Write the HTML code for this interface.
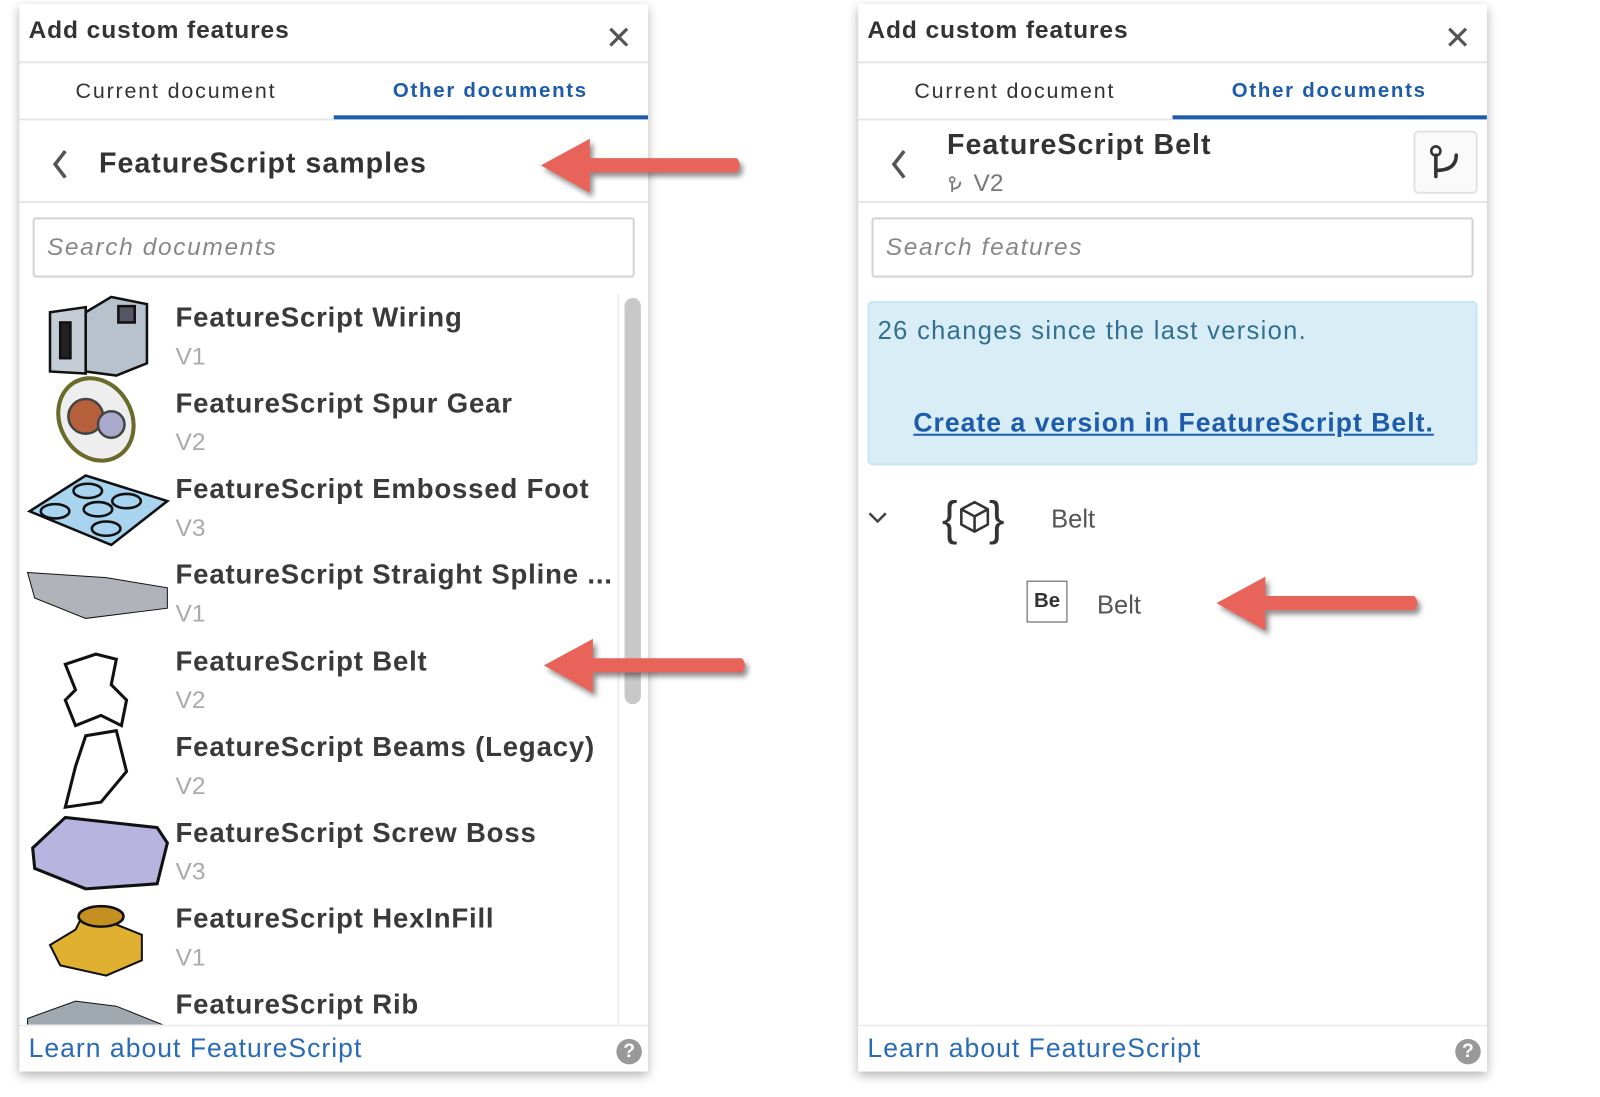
<!DOCTYPE html>
<html><head><meta charset="utf-8"><style>
*{box-sizing:border-box;margin:0;padding:0}
body{width:1600px;height:1097px;overflow:hidden;background:#fff;font-family:"Liberation Sans",sans-serif}
#w{position:absolute;left:0;top:0;width:1560px;height:1070px;transform:scale(1.0205);transform-origin:0 0}
.p{position:absolute;top:4px;width:616px;height:1046px;background:#fff;box-shadow:0 4px 10px rgba(0,0,0,.3)}
.a{position:absolute;white-space:nowrap}
.hl{position:absolute;left:0;right:0;height:2px;background:#e6e6e6}
.ttl{font-size:24px;font-weight:bold;color:#333;letter-spacing:.9px}
.tab{font-size:21px;color:#333;letter-spacing:1.8px}
.srch{position:absolute;border:2px solid #d4d4d4;border-radius:3px;height:59px}
.srch span{position:absolute;left:12px;top:14px;font-size:24px;font-style:italic;color:#888;letter-spacing:1.6px}
.nm{font-size:27px;font-weight:bold;color:#3a3a3a;letter-spacing:.8px}
.vr{font-size:24px;color:#aaa}
.lk{font-size:26px;color:#2a6bb8;letter-spacing:1px}
</style></head><body><div id="w">

<div class="p" style="left:19px">
 <div class="a ttl" style="left:9px;top:12px">Add custom features</div>
 <div class="a" style="left:574px;top:14px;font-size:32px;color:#555">✕</div>
 <div class="hl" style="top:56px"></div>
 <div class="a tab" style="left:55px;top:74px">Current document</div>
 <div class="a tab" style="left:366px;top:74px;color:#1c5cab;font-weight:bold;font-size:20px;letter-spacing:1.7px">Other documents</div>
 <div class="a" style="left:308px;top:109px;width:308px;height:4px;background:#1c5cab"></div>
 <div class="hl" style="top:112px;right:308px"></div>
 <svg class="a" style="left:30px;top:140px" width="20" height="34"><path d="M15 4 L5 17 L15 30" stroke="#555" stroke-width="3.5" fill="none"/></svg>
 <div class="a nm" style="left:78px;top:140px;font-size:28px;font-weight:bold;color:#333;letter-spacing:1px">FeatureScript samples</div>
 <div class="hl" style="top:193px"></div>
 <div class="srch" style="left:13px;top:209px;width:590px"><span>Search documents</span></div>
 <div class="a" style="left:586px;top:284px;width:2px;height:718px;background:#eee"></div>
 <div class="a" style="left:593px;top:288px;width:16px;height:398px;background:#c8c8c8;border-radius:8px"></div>

 <svg class="a" style="left:5px;top:282px" width="145" height="720">
  <g stroke="#111" stroke-width="2.5">
   <path d="M25 20 L60 15 L60 80 L25 78Z" fill="#c5cdd6"/>
   <path d="M60 20 L85 5 L120 12 L120 70 L90 82 L60 78Z" fill="#b8c2cc"/>
   <rect x="35" y="30" width="10" height="35" fill="#222"/>
   <rect x="92" y="14" width="16" height="16" fill="#556"/>
   <ellipse cx="70" cy="125" rx="35" ry="42" fill="#eee" stroke="#6a6a2a" stroke-width="4" transform="rotate(-30 70 125)"/>
   <circle cx="60" cy="122" r="17" fill="#b5603a" stroke="#444"/>
   <circle cx="85" cy="130" r="13" fill="#aac" stroke="#444"/>
   <path d="M5 215 L60 180 L140 205 L85 248Z" fill="#a8d4ef"/>
   <g fill="#a8d4ef"><ellipse cx="62" cy="195" rx="14" ry="7"/><ellipse cx="100" cy="205" rx="14" ry="7"/><ellipse cx="72" cy="213" rx="14" ry="7"/><ellipse cx="30" cy="215" rx="14" ry="7"/><ellipse cx="80" cy="232" rx="14" ry="7"/></g>
   <path d="M3 275 L80 280 L140 290 L140 310 L60 320 L10 300Z" fill="#b0b4ba" stroke-width="1"/>
   <path d="M70 355 L90 360 L85 385 L100 400 L95 425 L75 415 L50 425 L40 400 L50 390 L40 365Z" fill="none" stroke-width="3"/>
   <path d="M60 435 L90 430 L100 470 L75 500 L40 505 L50 465Z" fill="none" stroke-width="3"/>
   <path d="M8 545 L40 515 L130 525 L140 540 L130 580 L60 585 L10 565Z" fill="#b8b4e0" stroke-width="3"/>
   <path d="M55 615 L85 610 L90 620 L115 630 L115 655 L80 670 L35 660 L25 640 L50 625Z" fill="#e0b030" stroke-width="2"/>
   <ellipse cx="75" cy="612" rx="22" ry="10" fill="#c49020"/>
   <path d="M3 712 L50 695 L90 700 L140 720 L3 720Z" fill="#a0a8b0" stroke-width="1"/>
  </g>
 </svg>

 <div class="a nm" style="left:153px;top:292px">FeatureScript Wiring</div><div class="a vr" style="left:153px;top:332px">V1</div>
 <div class="a nm" style="left:153px;top:376px">FeatureScript Spur Gear</div><div class="a vr" style="left:153px;top:416px">V2</div>
 <div class="a nm" style="left:153px;top:460px">FeatureScript Embossed Foot</div><div class="a vr" style="left:153px;top:500px">V3</div>
 <div class="a nm" style="left:153px;top:544px">FeatureScript Straight Spline ...</div><div class="a vr" style="left:153px;top:584px">V1</div>
 <div class="a nm" style="left:153px;top:629px">FeatureScript Belt</div><div class="a vr" style="left:153px;top:669px">V2</div>
 <div class="a nm" style="left:153px;top:713px">FeatureScript Beams (Legacy)</div><div class="a vr" style="left:153px;top:753px">V2</div>
 <div class="a nm" style="left:153px;top:797px">FeatureScript Screw Boss</div><div class="a vr" style="left:153px;top:837px">V3</div>
 <div class="a nm" style="left:153px;top:881px">FeatureScript HexInFill</div><div class="a vr" style="left:153px;top:921px">V1</div>
 <div class="a nm" style="left:153px;top:965px">FeatureScript Rib</div>

 <div class="a" style="left:0;right:0;top:1000px;height:46px;background:#fff;border-top:2px solid #eee"></div>
 <div class="a lk" style="left:9px;top:1008px">Learn about FeatureScript</div>
 <div class="a" style="left:585px;top:1014px;width:25px;height:25px;border-radius:50%;background:#999;color:#fff;font-weight:bold;font-size:19px;text-align:center;line-height:25px">?</div>
</div>

<div class="p" style="left:841px">
 <div class="a ttl" style="left:9px;top:12px">Add custom features</div>
 <div class="a" style="left:574px;top:14px;font-size:32px;color:#555">✕</div>
 <div class="hl" style="top:56px"></div>
 <div class="a tab" style="left:55px;top:74px">Current document</div>
 <div class="a tab" style="left:366px;top:74px;color:#1c5cab;font-weight:bold;font-size:20px;letter-spacing:1.7px">Other documents</div>
 <div class="a" style="left:308px;top:109px;width:308px;height:4px;background:#1c5cab"></div>
 <div class="hl" style="top:112px;right:308px"></div>
 <svg class="a" style="left:30px;top:140px" width="20" height="34"><path d="M15 4 L5 17 L15 30" stroke="#555" stroke-width="3.5" fill="none"/></svg>
 <div class="a nm" style="left:87px;top:122px;font-size:28px;color:#333;letter-spacing:1px">FeatureScript Belt</div>
 <svg class="a" style="left:88px;top:168px" width="16" height="18"><circle cx="4" cy="4" r="2.5" stroke="#777" fill="none" stroke-width="1.5"/><path d="M4 7 V16 M4 13 Q12 13 12 6" stroke="#777" fill="none" stroke-width="1.8"/></svg>
 <div class="a vr" style="left:113px;top:162px;color:#777">V2</div>
 <div class="a" style="left:544px;top:124px;width:63px;height:62px;border:2px solid #e2e2e2;border-radius:5px;background:#fafafa"></div>
 <svg class="a" style="left:558px;top:136px" width="36" height="38"><circle cx="8" cy="8" r="4.5" stroke="#333" fill="none" stroke-width="2.5"/><path d="M8 12 V33 M8 27 Q28 27 28 12" stroke="#333" fill="none" stroke-width="3.5" stroke-linecap="round"/></svg>
 <div class="hl" style="top:193px"></div>
 <div class="srch" style="left:13px;top:209px;width:590px"><span>Search features</span></div>
 <div class="a" style="left:9px;top:291px;width:598px;height:161px;background:#d9edf7;border:2px solid #c8e6f4;border-radius:5px"></div>
 <div class="a" style="left:19px;top:306px;font-size:25px;color:#31708f;letter-spacing:1.3px">26 changes since the last version.</div>
 <div class="a" style="left:54px;top:395px;font-size:26px;font-weight:bold;color:#1c5cab;text-decoration:underline;letter-spacing:1px">Create a version in FeatureScript Belt.</div>
 <svg class="a" style="left:8px;top:495px" width="24" height="16"><path d="M3 4 L11 12 L19 4" stroke="#444" stroke-width="2.5" fill="none"/></svg>
 <svg class="a" style="left:82px;top:474px" width="66" height="60"><text x="0" y="46" font-size="46" font-family="Liberation Sans" fill="#333">{</text><text x="46" y="46" font-size="46" font-family="Liberation Sans" fill="#333">}</text><path d="M32 14 L45 21 L45 36 L32 43 L19 36 L19 21Z M19 21 L32 28 L45 21 M32 28 V43" stroke="#333" stroke-width="2.5" fill="none" stroke-linejoin="round"/></svg>
 <div class="a" style="left:189px;top:491px;font-size:25px;color:#555">Belt</div>
 <div class="a" style="left:165px;top:565px;width:40px;height:41px;border:1.5px solid #555;font-size:20px;font-weight:bold;color:#333;text-align:center;line-height:38px">Be</div>
 <div class="a" style="left:234px;top:575px;font-size:25px;color:#555">Belt</div>
 <div class="a" style="left:0;right:0;top:1000px;height:46px;background:#fff;border-top:2px solid #eee"></div>
 <div class="a lk" style="left:9px;top:1008px">Learn about FeatureScript</div>
 <div class="a" style="left:585px;top:1014px;width:25px;height:25px;border-radius:50%;background:#999;color:#fff;font-weight:bold;font-size:19px;text-align:center;line-height:25px">?</div>
</div>

<svg class="a" style="left:0;top:0" width="1560" height="1070">
 <defs><filter id="s" x="-20%" y="-30%" width="140%" height="170%"><feDropShadow dx="3" dy="4" stdDeviation="2.5" flood-color="#000" flood-opacity=".45"/></filter></defs>
 <g fill="#e8635a" filter="url(#s)">
  <path d="M530 162 L578 136 L578 155 L722 155 Q728 162 722 169 L578 169 L578 189Z"/>
  <path d="M533 652 L581 626 L581 645 L727 645 Q733 652 727 659 L581 659 L581 679Z"/>
  <path d="M1192 591 L1240 565 L1240 584 L1386 584 Q1392 591 1386 598 L1240 598 L1240 618Z"/>
 </g>
</svg>
</div></body></html>
